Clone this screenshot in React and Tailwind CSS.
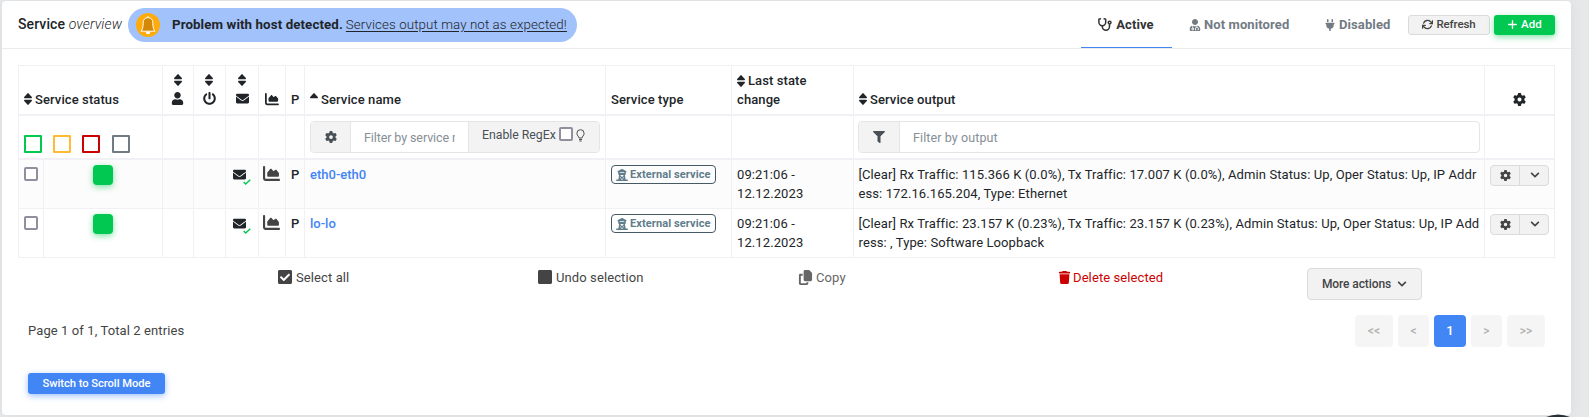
import React from "react";
import { FaUser, FaPowerOff, FaEnvelope, FaUserMd, FaPlug, FaFilter, FaCheckSquare, FaSquare, FaChevronDown } from "react-icons/fa";
import { FaGear, FaTrash, FaPlus, FaCopy, FaChartArea, FaTowerObservation } from "react-icons/fa6";
import { FiRefreshCw } from "react-icons/fi";

const COLS = "grid grid-cols-[144px_31px_32px_33px_27px_19px_301px_126px_122px_631px_71px]";
const CELL = "border-l border-[#f0f0f5] min-w-0";

const rows = [
  {
    name: "eth0-eth0",
    output: ["[Clear] Rx Traffic: 115.366 K (0.0%), Tx Traffic: 17.007 K (0.0%), Admin Status: Up, Oper Status: Up, IP Addr", "ess: 172.16.165.204, Type: Ethernet"],
    bg: "bg-[#fcfcfc]",
  },
  {
    name: "lo-lo",
    output: ["[Clear] Rx Traffic: 23.157 K (0.23%), Tx Traffic: 23.157 K (0.23%), Admin Status: Up, Oper Status: Up, IP Add", "ress: , Type: Software Loopback"],
    bg: "bg-white",
  },
];

function Bell() {
  return (
    <svg viewBox="0 0 24 24" className="h-6 w-6 shrink-0">
      <circle cx="12" cy="12" r="12" fill="#ffab09" />
      <path d="M12 4.600c-3.200 0-4.800 2.200-4.800 5 0 4.800-.8 7-2.200 8.600h14c-1.400-1.600-2.200-3.800-2.200-8.600 0-2.800-1.600-5-4.800-5z" fill="#d48806" stroke="#fff" strokeWidth="1" strokeLinejoin="round" />
      <path d="M12 3.500v1M10 18.800a2 2 0 0 0 4 0" fill="#fff" stroke="#fff" strokeWidth="1" strokeLinecap="round" />
    </svg>
  );
}

function Sort({ up = false }) {
  return (
    <svg viewBox="0 0 8 12" className="h-3 w-2 shrink-0" fill="currentColor">
      <path d="M4 .1Q4.300.1 4.600.4L7.800 4Q8.300 5.200 7.400 5.200H.6Q-.3 5.200.2 4L3.400.4Q3.700.1 4 .1z" />
      {!up && <path d="M4 11.900Q4.300 11.900 4.600 11.600L7.800 8Q8.300 6.800 7.400 6.800H.6Q-.3 6.800.2 8L3.400 11.600Q3.700 11.900 4 11.900z" />}
    </svg>
  );
}

function Stethoscope() {
  return (
    <svg viewBox="0 0 14 13" className="h-[13px] w-[14px] shrink-0" fill="none" stroke="currentColor" strokeWidth="1.500" strokeLinecap="round" strokeLinejoin="round">
      <path d="M2.400.8L.9 1.200v3.100a3.400 3.400 0 0 0 6.800 0V1.200L6.200.8" />
      <path d="M4.300 7.800v.8a3.600 3.600 0 0 0 7.200 0V6.200" />
      <circle cx="11.600" cy="4.600" r="1.400" />
    </svg>
  );
}

function Bulb() {
  return (
    <svg viewBox="0 0 9 13" className="h-[13px] w-[9px]" fill="none" stroke="#505050">
      <path d="M3 9C3 7.500.9 6.700.9 4.300a3.600 3.600 0 0 1 7.200 0C8.100 6.700 6 7.500 6 9z" strokeWidth="1" />
      <path d="M3 10.500h3M3.300 12h2.400" strokeWidth="1" />
    </svg>
  );
}

function ServiceRow({ row }) {
  return (
    <div className={`${COLS} ${row.bg} h-[49px] border-b border-[#f0f0f5]`}>
      <div className={`${CELL} flex`}>
        <div className="w-6 pt-[7px] pl-[5px]">
          <div className="h-[14px] w-[14px] rounded-[2px] border-2 border-[#8f8f9d] bg-white" />
        </div>
        <div className="flex-1 border-l border-[#f0f0f5] pt-[5px] pl-[49px]">
          <div className="h-5 w-5 rounded-[4px] bg-[#00c851] shadow-[0_2px_6px_rgba(0,200,81,0.5)]" />
        </div>
      </div>
      <div className={CELL} />
      <div className={CELL} />
      <div className={`${CELL} relative pt-[8px] pl-[7px]`}>
        <FaEnvelope size={13} />
        <svg viewBox="0 0 8 6" className="absolute top-[19px] left-[17px] h-[6px] w-2">
          <path d="M.7 3l2 2L7.300.7" fill="none" stroke="#00c851" strokeWidth="1.400" />
        </svg>
      </div>
      <div className={`${CELL} pt-[5px] pl-[4px]`}>
        <FaChartArea size={17} color="#444444" />
      </div>
      <div className={`${CELL} pt-[5px] pl-[5px] font-medium`}>P</div>
      <div className={`${CELL} pt-[5px] pl-[5px] font-medium tracking-normal text-[#4285f4]`}>{row.name}</div>
      <div className={`${CELL} pt-[5px] pl-[5px]`}>
        <div className="flex h-[19px] w-[105px] items-center gap-[3px] rounded-[4px] border border-[#455a64] pl-[4px] text-[11px] font-bold whitespace-nowrap text-[#607d8b]">
          <FaTowerObservation size={12} className="-mr-px shrink-0" />
          External service
        </div>
      </div>
      <div className={`${CELL} pt-[5px] pl-[5px]`}>
        09:21:06 -<br />12.12.2023
      </div>
      <div className={`${CELL} pt-[5px] pl-[4.500px] whitespace-nowrap`}>
        {row.output[0]}<br />{row.output[1]}
      </div>
      <div className={`${CELL} border-r pt-[5px] pl-[5px]`}>
        <div className="flex h-[21px] w-[59px] rounded-[4px] border border-[#dbdbdb] bg-[#f2f2f2] text-[#444]">
          <div className="flex w-[29px] items-center justify-center border-r border-[#dbdbdb] pb-px"><FaGear size={11} /></div>
          <div className="flex flex-1 items-center justify-center pb-px pl-[2px]"><FaChevronDown size={10} /></div>
        </div>
      </div>
    </div>
  );
}

export default function App() {
  return (
    <div className="relative h-[417px] w-[1589px] overflow-hidden bg-[#e6e8ea] pt-px pl-0.5 font-['Roboto',sans-serif] text-[13px] leading-[19px] tracking-[0.1px] text-[#212529]">
      <div className="h-[414px] w-[1569px] rounded-[4px] bg-white shadow-[0_0_13px_rgba(74,83,107,0.08)]">
        <header className="flex h-[48px] items-center border-b border-[#ededed] pr-4 pl-4">
          <h2 className="text-[14px] font-medium whitespace-nowrap">Service <span className="font-light italic">overview</span></h2>
          <div className="ml-[6px] flex h-[34px] w-[449px] items-center rounded-full bg-[#a1c2fa] pl-2 text-[13.3px] whitespace-nowrap">
            <Bell />
            <span className="ml-3 font-bold">Problem with host detected.</span>
            <span className="ml-[3px] font-light underline underline-offset-2">Services output may not as expected!</span>
          </div>
          <nav className="ml-auto flex h-full items-center text-[13px] font-bold text-[#727b84]">
            <div className="mt-px flex h-[45px] w-[91px] items-center justify-center gap-1 border-b border-[#4285f4] pr-px text-[#333]"><Stethoscope />Active</div>
            <div className="ml-[17px] flex w-[101px] items-center gap-[3px] whitespace-nowrap"><FaUserMd size={12} className="shrink-0" />Not monitored</div>
            <div className="ml-[34px] flex w-[66px] items-center gap-[3px] whitespace-nowrap"><FaPlug size={12} className="shrink-0" />Disabled</div>
          </nav>
          <button className="ml-[18px] flex h-5 w-[82px] items-center justify-center gap-[3px] rounded-[3px] border border-[#dbdbdb] bg-[#f2f2f2] text-[11.500px] font-medium tracking-[-0.1px] text-[#444]"><FiRefreshCw size={11} strokeWidth={3} />Refresh</button>
          <button className="ml-1 flex h-5 w-[61px] items-center justify-center gap-[3px] rounded-[3px] bg-[#00c851] text-[11.500px] font-medium text-white shadow-[0_2px_6px_rgba(0,200,81,0.5)]"><FaPlus size={11} />Add</button>
        </header>

        <main className="pt-4 pl-4">
          <div className="w-[1537px] border-t border-[#f0f0f5]">
            <div className={`${COLS} h-[50px] border-b-2 border-[#f0f0f5] font-medium`}>
              <div className={`${CELL} flex items-end gap-[3px] pb-[5px] pl-[5px]`}><span className="mb-[4px]"><Sort /></span>Service status</div>
              <div className={`${CELL} flex flex-col items-center gap-[6px] pt-[8px] pr-px`}><Sort /><FaUser size={13} /></div>
              <div className={`${CELL} flex flex-col items-center gap-[6px] pt-[8px] pr-px`}><Sort /><FaPowerOff size={13} /></div>
              <div className={`${CELL} flex flex-col items-center gap-[6px] pt-[8px]`}><Sort /><FaEnvelope size={13} /></div>
              <div className={`${CELL} flex items-end justify-center pb-[8px]`}><FaChartArea size={14} /></div>
              <div className={`${CELL} flex items-end pb-[5px] pl-[5px]`}>P</div>
              <div className={`${CELL} flex items-end gap-[3px] pb-[5px] pl-[5px]`}><span className="mb-[4px]"><Sort up /></span>Service name</div>
              <div className={`${CELL} flex items-end pb-[5px] pl-[5px]`}>Service type</div>
              <div className={`${CELL} pt-[5px] pl-[5px]`}><span className="flex items-center gap-[3px]"><Sort />Last state</span>change</div>
              <div className={`${CELL} flex items-end gap-[3px] pb-[5px] pl-[5px]`}><span className="mb-[4px]"><Sort /></span>Service output</div>
              <div className={`${CELL} flex items-end justify-center border-r pb-[8px]`}><FaGear size={13} /></div>
            </div>
            <div className={`${COLS} h-[44px] border-b-2 border-[#f0f0f5]`}>
              <div className={`${CELL} flex gap-[11px] pt-[19px] pl-[5px]`}>
                <i className="h-[18px] w-[18px] rounded-[1px] border-2 border-[#00c851]" />
                <i className="h-[18px] w-[18px] rounded-[1px] border-2 border-[#ffbb33]" />
                <i className="h-[18px] w-[18px] rounded-[1px] border-2 border-[#cc0000]" />
                <i className="ml-px h-[18px] w-[18px] rounded-[1px] border-2 border-[#727b84]" />
              </div>
              <div className={CELL} /><div className={CELL} /><div className={CELL} /><div className={CELL} /><div className={CELL} />
              <div className={`${CELL} pt-[5px] pl-[5px]`}>
                <div className="flex h-8 w-[290px] overflow-hidden rounded-[4px] border border-[#e5e5e5]">
                  <div className="flex w-10 items-center justify-center border-r border-[#e5e5e5] bg-[#f3f3f3] text-[#495057]"><FaGear size={12} /></div>
                  <div className="flex w-[118px] items-center border-r border-[#e5e5e5] pt-px pl-[13px] text-[12.500px] tracking-[-0.1px] text-[#868e96]"><span className="w-[91px] overflow-hidden whitespace-nowrap">Filter by service name</span></div>
                  <div className="flex flex-1 bg-[#f3f3f3] pt-[5px] pl-[13px] text-[12.300px] tracking-[-0.02px] whitespace-nowrap text-[#495057]">
                    <span className="-mt-px w-[73px]">Enable RegEx</span>
                    <i className="ml-1 h-[14px] w-[14px] rounded-[2px] border-2 border-[#8f8f9d] bg-white" />
                    <span className="mt-[2px] ml-[3px]"><Bulb /></span>
                  </div>
                </div>
              </div>
              <div className={CELL} /><div className={CELL} />
              <div className={`${CELL} pt-[5px] pl-[4px]`}>
                <div className="flex h-8 w-[622px] overflow-hidden rounded-[4px] border border-[#e5e5e5]">
                  <div className="flex w-[41px] items-center justify-center border-r border-[#e5e5e5] bg-[#f3f3f3] text-[#495057]"><FaFilter size={12} /></div>
                  <div className="flex items-center pt-px pl-[13px] text-[12.500px] text-[#868e96]">Filter by output</div>
                </div>
              </div>
              <div className={`${CELL} border-r`} />
            </div>
            {rows.map((row) => <ServiceRow key={row.name} row={row} />)}
          </div>

          <div className="flex h-[50px] pl-[260px] text-[#444]">
            <div className="flex h-[19px] w-[260px] items-center gap-[3px] pt-[19px]"><FaCheckSquare size={16} className="-ml-px" />Select all</div>
            <div className="flex h-[19px] w-[260px] items-center gap-[3px] pt-[19px]"><FaSquare size={16} className="-ml-px" />Undo selection</div>
            <div className="flex h-[19px] w-[260px] items-center gap-[3px] pt-[19px] text-[#666]"><FaCopy size={15} />Copy</div>
            <div className="flex h-[19px] w-[249px] items-center gap-[2px] pt-[19px] text-[#cc0000]"><FaTrash size={13} />Delete selected</div>
            <button className="mt-[10px] flex h-8 w-[115px] items-center justify-center gap-[6px] rounded-[4px] border border-[#dbdbdb] bg-[#f2f2f2] text-[12px] font-medium tracking-[-0.1px] text-[#444]">More actions<FaChevronDown size={10} /></button>
          </div>
          <div className="mt-[7px] flex h-8 w-[1527px] items-center pl-[10px] text-[#444]">
            <span className="-mt-[2px]">Page 1 of 1, Total 2 entries</span>
            <div className="ml-auto flex h-8 gap-[5px] text-[13px] font-medium text-[#b3b3b3]">
              <span className="flex w-[38px] items-center justify-center rounded-[4px] bg-[#f5f5f5] text-[12px]">&lt;&lt;</span>
              <span className="flex w-[31px] items-center justify-center rounded-[4px] bg-[#f5f5f5] text-[12px]">&lt;</span>
              <span className="flex w-8 items-center justify-center rounded-[4px] bg-[#4285f4] pb-px text-white">1</span>
              <span className="flex w-[31px] items-center justify-center rounded-[4px] bg-[#f5f5f5] text-[12px]">&gt;</span>
              <span className="flex w-[38px] items-center justify-center rounded-[4px] bg-[#f5f5f5] text-[12px]">&gt;&gt;</span>
            </div>
          </div>
          <button className="mt-[26px] ml-[10px] flex h-[21px] w-[137px] items-center justify-center rounded-[3px] bg-[#4285f4] text-[11.200px] font-medium tracking-[-0.05px] text-white shadow-[0_2px_6px_rgba(66,133,244,0.5)]">Switch to Scroll Mode</button>
        </main>
      </div>
      <svg viewBox="0 0 24 3" className="absolute bottom-0 left-[1546px] h-[3px] w-6">
        <path d="M0 3Q12-2 24 3z" fill="#263238" />
      </svg>
    </div>
  );
}
